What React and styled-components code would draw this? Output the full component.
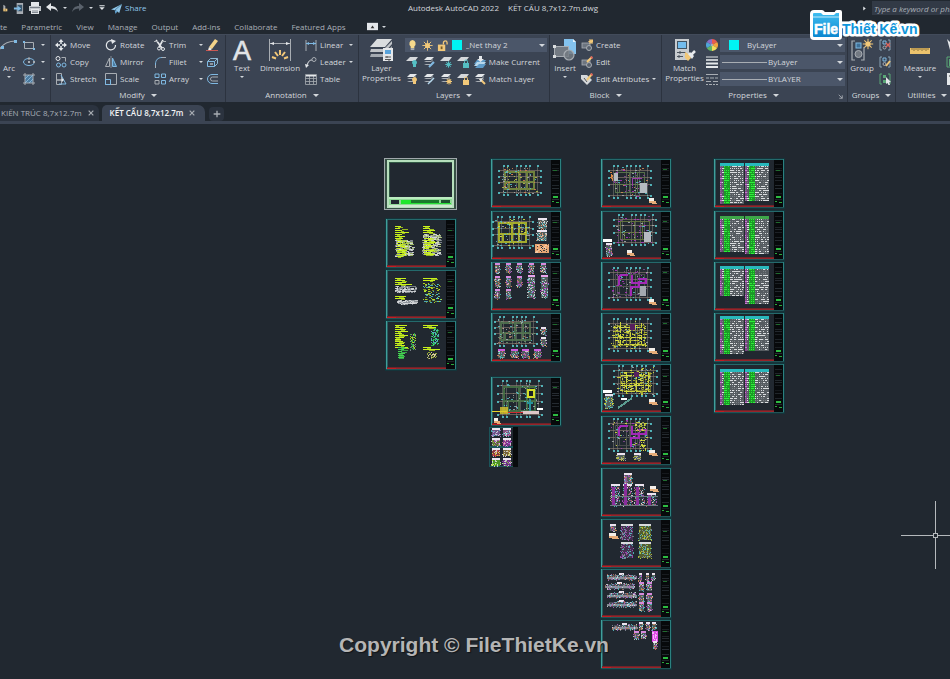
import React from 'react';
import styled, { createGlobalStyle } from 'styled-components';

const c = {
  dark: '#212830',
  panel: '#3b4453',
  edge: '#2c333f',
  field: '#4b5669',
  text: '#d3d7dc',
  dim: '#a9afb7',
  white: '#e4e7ea',
  grey: '#a8adb3',
  blue: '#7fb9e2',
  gold: '#f2c879',
  teal: '#55bfc4',
};

const GlobalStyle = createGlobalStyle`
  * { box-sizing: border-box; }
  body { margin: 0; background: ${c.dark}; }
  button, input, select { font: inherit; color: inherit; border: 0; background: none; padding: 0; margin: 0; }
  svg { display: block; flex: none; }
`;

const Page = styled.div`
  min-height: 100vh;
  display: flex;
  flex-direction: column;
  overflow: hidden;
  background: ${c.dark};
  color: ${c.text};
  font: 8px/12px "Open Sans", "Noto Sans", sans-serif;
  white-space: nowrap;
`;

/* ---------- title bar ---------- */
const TitleBar = styled.header`
  position: relative;
  display: flex;
  align-items: center;
  justify-content: space-between;
  height: 16px;
`;
const QuickAccess = styled.div`
  display: flex;
  align-items: center;
  flex: 1 0 0;
  gap: 5px;
`;
const QuickButton = styled.button`
  display: flex;
  align-items: center;
  gap: ${(p) => (p.$wide ? 3 : 5)}px;
  color: ${(p) => (p.$accent ? '#8fc6e8' : c.text)};
`;
const DocTitle = styled.h1`
  display: flex;
  gap: 9px;
  margin: 0 0 0 56px;
  font-size: 8px;
  font-weight: 400;
`;
const SearchArea = styled.div`
  display: flex;
  align-items: center;
  justify-content: flex-end;
  flex: 1 0 0;
  gap: 5px;
`;
const SearchInput = styled.input`
  width: 78px;
  height: 14px;
  padding-left: 2px;
  background: #323a46;
  font-style: italic;
  &::placeholder { color: ${c.dim}; opacity: 1; }
`;

/* ---------- menu ---------- */
const Menu = styled.nav`
  display: flex;
  align-items: center;
  gap: 14px;
  height: 18px;
  padding-top: 3px;
  color: ${c.dim};
`;
const MenuLink = styled.a`
  color: inherit;
  text-decoration: none;
`;
const MinimizeButton = styled.button`
  display: flex;
  align-items: center;
  gap: 4px;
  margin-left: 7px;
`;

/* ---------- ribbon ---------- */
const Ribbon = styled.div`
  display: grid;
  grid-template-columns: 51fr 175fr 133fr 191fr 112fr 186fr 48fr 54fr;
  background: ${c.panel};
  border-top: 1px solid #424b5a;
`;
const Panel = styled.section`
  display: flex;
  flex-direction: column;
  min-width: 0;
  overflow: hidden;
  border-right: 1px solid ${c.edge};
  &:last-child { border-right: 0; }
`;
const PanelBody = styled.div`
  display: flex;
  height: 53px;
  padding: 1px 2px 0 ${(p) => p.$left ?? 3}px;
  gap: ${(p) => p.$gap ?? 4}px;
`;
const PanelTitle = styled.div`
  display: flex;
  align-items: center;
  justify-content: center;
  gap: 6px;
  height: 14px;
  padding-left: ${(p) => p.$left || 0}px;
`;
const Launcher = styled.button`
  display: flex;
  margin: 2px 3px 0 auto;
`;
const TitleGroup = styled.div`
  display: flex;
  align-items: center;
  gap: 6px;
  margin-left: auto;
`;
const ToolColumn = styled.div`
  display: flex;
  flex-direction: column;
  flex: ${(p) => (p.$width ? `0 0 ${p.$width}px` : '1 1 0')};
  min-width: 0;
`;
const Tool = styled.button`
  display: flex;
  align-items: center;
  gap: 3px;
  height: 17px;
  padding-right: 3px;
  text-align: left;
`;
const BigTool = styled.button`
  display: flex;
  flex-direction: column;
  align-items: center;
  flex: 0 0 ${(p) => p.$width}px;
  line-height: 10px;
`;
const BigIcon = styled.span`
  display: flex;
  align-items: center;
  justify-content: center;
  height: 27px;
`;
const BigLabel = styled.span`
  margin-bottom: 3px;
`;
const Caret = styled.span`
  width: 0;
  height: 0;
  flex: none;
  margin-left: ${(p) => (p.$push ? 'auto' : 0)};
  border: ${(p) => (p.$large ? 3 : 2)}px solid transparent;
  border-top-color: ${c.text};
  border-bottom: 0;
`;
const Field = styled.label`
  display: flex;
  align-items: center;
  gap: ${(p) => p.$gap || 4}px;
  height: 14px;
  margin: 2px 0 1px;
  padding: 0 2px;
  background: ${c.field};
`;
const FieldSelect = styled.select`
  flex: 1;
  min-width: 0;
  appearance: none;
  outline: 0;
`;
const Swatch = styled.span`
  width: 10px;
  height: 10px;
  margin-left: ${(p) => p.$left || 0}px;
  background: #00f4f4;
`;
const LineSample = styled.span`
  width: 45px;
  border-top: 1px solid ${c.grey};
`;
const ToolRow = styled.div`
  display: flex;
  gap: 2px;
  padding-left: 1px;
`;

/* ---------- file tabs ---------- */
const FileTabs = styled.div`
  display: flex;
  align-items: flex-end;
  height: 20px;
  border-bottom: 1px solid ${c.panel};
`;
const FileTab = styled.div`
  display: flex;
  align-items: center;
  gap: 5px;
  height: 16px;
  margin-right: ${(p) => (p.$active ? 4 : 3)}px;
  padding: ${(p) => (p.$active ? '0 9px 0 8px' : '0 4px 0 1px')};
  border-radius: ${(p) => (p.$active ? '5px 7px 0 0' : '0 6px 0 0')};
  background: ${(p) => (p.$active ? c.panel : '#2b333f')};
  color: ${(p) => (p.$active ? '#f3f4f5' : c.dim)};
  font-weight: ${(p) => (p.$active ? 600 : 400)};
`;
const NewTab = styled.button`
  display: flex;
  align-items: center;
  justify-content: center;
  width: 15px;
  height: 14px;
  border-radius: 4px;
  background: #2b333f;
`;
const TabRule = styled.div`
  height: 2px;
  background: ${c.panel};
`;

/* ---------- canvas ---------- */
const Canvas = styled.main`
  position: relative;
  flex: 1;
  overflow: hidden;
`;
const Drawing = styled.svg`
  width: 100%;
  height: auto;
`;
const Watermark = styled.p`
  position: absolute;
  left: 0;
  right: 2px;
  bottom: 22px;
  margin: 0;
  text-align: center;
  font: bold 21px/24px "Liberation Sans", Arial, sans-serif;
  color: #b5b5b5;
  text-shadow: 1px 1px 1px #101418;
`;
const LogoBadge = styled.svg`
  position: absolute;
  top: 8px;
  right: 29px;
`;

/* ---------- icons, each on a 12 unit grid ---------- */
const L = (d, s = c.white, w = 1, f = 'none') => <path d={d} stroke={s} strokeWidth={w} fill={f} />;
const F = (d, f = c.white) => <path d={d} fill={f} />;
const sheets = (
  <>
    {F('M4 1h7L8 4H1z')}
    {F('M3 5l5 0 2-2v1L8 6H1z', c.grey)}
    {F('M3 8h5l2-3v1L8 9H1z', c.grey)}
  </>
);
const oneSheet = F('M4 1h8L9 5H0z', '#d5d8db');
const bulb = (f) => F('M8.500 4a2.500 2.500 0 0 1 1.500 4.500V11H7V8.500A2.500 2.500 0 0 1 8.500 4z', f);
const lock = (f) => (
  <>
    <rect x="6" y="7" width="6" height="5" fill={f} />
    {L('M7.500 7V5.500a1.500 1.500 0 0 1 3 0V7', f)}
  </>
);
const blockBase = (
  <>
    <rect x="1" y="4" width="8" height="5" fill="#6d7580" stroke={c.grey} strokeWidth=".8" />
    <circle cx="8" cy="9" r="2.500" fill="#59616d" stroke={c.grey} />
  </>
);
const sun = (x, y, r, f = c.gold) => (
  <g stroke={f} strokeWidth="1">
    <circle cx={x} cy={y} r={r} fill={f} stroke="none" />
    {[0, 45, 90, 135].map((a) => (
      <path key={a} d={`M${x - r * 2} ${y}h${r * 4}`} transform={`rotate(${a} ${x} ${y})`} />
    ))}
  </g>
);
const brackets = (s) => L('M3 1H1v10h2M9 1h2v10H9', s);

const icons = {
  saveas: <>{F('M5 1l3 2v5H5z', c.grey)}{F('M5 7h6v4H5z', c.gold)}{L('M7 9h2', '#333')}</>,
  mobile: <><rect x="4" y="0" width="7" height="12" fill={c.grey} />{F('M5 2h5v7H5z', '#3a566c')}{F('M1 5h4V3l4 3-4 3V7H1z', c.blue)}</>,
  print: <>{F('M2 0h8v4H2z')}{F('M0 4h12v5H0z', '#c4c8cc')}{F('M2 7h8v5H2z')}{L('M3 9h6M3 10.500h6M1 5.500h10', '#59616d', 0.7)}</>,
  undo: F('M0 5l5-4v3c4 0 6 2 7 6-2-3-4-3.500-7-3.500V9z'),
  redo: F('M12 5L7 1v3C3 4 1 6 0 10c2-3 4-3.500 7-3.500V9z', '#5a626c'),
  more: F('M2 2h8v1.500H2zM2 5h8L6 9z'),
  share: <>{F('M0 7l12-6-3 10-4-3z', '#8fc6e8')}{F('M4 8l1 4 2-3z', '#63a6d6')}{L('M12 1L4 8', '#34607c', 0.7)}</>,
  rect: <>{L('M1.500 3.500h9v6h-9z', c.grey)}{F('M0 2h2v2H0zM10 9h2v2h-2z', c.blue)}</>,
  ellipse: <><ellipse cx="6" cy="6" rx="5.500" ry="3.500" fill="none" stroke={c.blue} />{F('M5 5h2v2H5zM10 5h2v2h-2zM5 1.500h2v2H5z', c.grey)}</>,
  hatch: <>{F('M2 2h8v8H2z', '#4b7ba0')}{L('M2 0v12M10 0v12M0 2h12M0 10h12', c.grey)}{L('M2 6l4-4M2 10l8-8M6 10l4-4', '#9fc9e6', 0.7)}</>,
  move: <>{L('M6 1v10M1 6h10', c.white, 1.5)}{F('M6 0l2.500 3h-5zM6 12l2.500-3h-5zM0 6l3-2.500v5zM12 6L9 3.500v5z')}<rect x="5" y="5" width="2" height="2" fill={c.panel} /></>,
  rotate: <>{L('M8 2.200A4.600 4.600 0 1 0 10.500 6', c.white, 1.2)}{F('M6 0l5 2-4 3z')}</>,
  trim: <>{L('M2 1l6 8M9 1L5 8', c.white, 1.6)}<circle cx="5" cy="9.500" r="1.500" fill="none" stroke={c.white} /><circle cx="9" cy="10" r="1.500" fill="none" stroke={c.white} />{L('M0 2.500h4M8 2.500h4', c.grey)}</>,
  eraser: <>{F('M9 0l3 2-6 8-3-2z', '#f3d489')}{F('M3 8l3 2-2 1.500H2z', '#f1efe9')}{L('M0 11.500h12', '#d95b55', 0.9)}</>,
  copy: <><circle cx="3" cy="2.500" r="2" fill="none" stroke={c.white} />{L('M6.500 1.500h4v4', c.grey)}<circle cx="3.500" cy="9" r="2" fill="none" stroke={c.blue} /><circle cx="9" cy="9" r="2" fill="none" stroke={c.blue} /></>,
  mirror: <>{L('M4.500 2v8.500H.5z', c.grey)}{L('M7.500 2v8.500h4z', c.blue, 1, '#4b7ba0')}{L('M6 0v12', c.grey, 0.7)}</>,
  fillet: <>{L('M1.500 12V8C1.500 4 4 1.500 8 1.500', c.blue)}{L('M8 1.500h4M1.500 9v3', c.grey)}</>,
  explode: <>{L('M1.500 5.500h7v5h-7z', c.blue)}{L('M1.500 5.500l3-3h7l-3 3M11.500 2.500v5l-3 3', '#8fb9d4')}{L('M4 8h3', c.white)}</>,
  stretch: <>{L('M1.500.5h5v11h-5z', c.grey)}{L('M6 2l5 9H4', c.blue)}{L('M2 7h5', c.white)}{F('M7 5l2 2-2 2z')}</>,
  scale: <>{L('M.5.5h11v11H.5z', c.grey)}{L('M.5 6.500h5v5', c.blue)}{L('M.5 6v5.500H6', c.blue)}</>,
  array: <>{L('M1 1h4v3.500H1zM7.500 1h4v3.500h-4zM7.500 7.500h4V11h-4z', c.blue)}{L('M1 7.500h4V11H1z', c.grey)}</>,
  offset: <>{L('M12 1.500H6a4.500 4.500 0 0 0 0 9h6', c.blue)}{L('M12 4H6.500a2 2 0 0 0 0 4H12', c.grey)}</>,
  linear: <>{L('M1 1v11M11 1v11', c.grey)}{L('M1 4.500h10', c.blue)}{F('M1 4.500l3-1.500v3zM11 4.500L8 3v3z', c.blue)}</>,
  leader: <>{L('M2 10c1-5 3-6 5-6', c.white)}{F('M0 8l4 1-3 3z')}<circle cx="9" cy="3.500" r="2" fill="none" stroke={c.grey} /></>,
  table: <>{L('M.5 1.500h11v10H.5zM.5 5.500h11M.5 8.500h11M4.500 2v9M8.500 2v9', c.grey, 0.8)}{F('M1 2h10v1.500H1z')}</>,
  bulbOn: <>{F('M6 0a4 4 0 0 1 2 7v2H4V7a4 4 0 0 1 2-7z', '#f6d98c')}{F('M4 9h4v2H4z', c.grey)}</>,
  sun: sun(6, 6, 2.8),
  unlock: <>{F('M1 5h8v7H1z', c.gold)}{L('M7 5V3a2 2 0 0 1 4 0v2', c.gold, 1.4)}{F('M4 7h2v3H4z', '#755c2a')}</>,
  layOff: <>{oneSheet}{bulb(c.teal)}</>,
  layIso: <>{sheets}{L('M6 11l5-5', c.blue, 2)}</>,
  layFreeze: <>{oneSheet}{sun(8.5, 8.5, 1.6, c.teal)}</>,
  layLock: <>{oneSheet}{lock(c.teal)}</>,
  layOn: <>{sheets}{bulb(c.gold)}</>,
  layUniso: <>{sheets}{L('M5 11l6-6', '#b6d7ec', 1.5)}</>,
  layThaw: <>{sheets}{sun(9, 8.5, 1.5)}</>,
  layUnlock: <>{oneSheet}{lock(c.gold)}</>,
  makeCurrent: <>{F('M3 4h9l-3 4H0z', '#5e9bc8')}{F('M3 6h9l-3 4H0z', '#b6d7ec')}{F('M5 8h7l-3 4H1z', '#5e9bc8')}{F('M5 0h3v3h2L6.500 6 3 3h2z')}</>,
  matchLayer: <>{sheets}{L('M6 6l5 5', c.gold, 2)}{F('M5 6l4-1-2 4z')}</>,
  create: <>{blockBase}{sun(10, 2.5, 1.3)}</>,
  edit: <>{blockBase}{L('M6 6l5-5', c.gold, 2)}{F('M11 0l1 2-1 1-2-2z', '#e0645b')}</>,
  editAttr: <>{F('M0 2h6l5 5-5 5-6-6z', '#d5d8db')}{L('M6 7l5-6', c.gold, 2)}{F('M11 0l1 2-1 1-2-2z', '#e0645b')}{L('M3 5l3 4', '#555')}</>,
  wheel: <>{['#e85a4f', '#f4a340', '#f3de5b', '#62b565', '#4ea5d8', '#8c6cc4'].map((f, i) => <path key={f} d="M6 6V0a6 6 0 0 1 5.200 3z" fill={f} transform={`rotate(${i * 60} 6 6)`} />)}<circle cx="6" cy="6" r="1.200" fill={c.grey} /></>,
  weights: <>{L('M0 1h12', c.white)}{L('M0 4h12', c.white, 1.6)}{L('M0 7.500h12M0 11h12', c.white, 2)}</>,
  types: L('M0 1.500h12M0 8.500h5M7 8.500h5M0 5h3M4 5h4M9 5h3M0 11.500h2M3 11.500h3M7 11.500h2M10 11.500h2', c.grey, 1.2),
  ungroup: <>{brackets('#8aa3b5')}{L('M4 2h3v3H4z', c.blue)}<circle cx="5.500" cy="8.500" r="1.500" fill="none" stroke={c.grey} />{L('M7 4l4 4M11 4L7 8', '#e0645b', 1.3)}</>,
  groupEdit: <>{brackets('#8aa3b5')}{L('M4 2h3v3H4z', c.blue)}<circle cx="5.500" cy="8" r="1.500" fill="none" stroke={c.grey} />{L('M7 10l4-5', c.gold, 2)}</>,
  groupSel: <>{brackets('#5aa777')}{F('M4 2h3v3H4zM4 7h3v3H4z', '#5aa777')}{F('M7 4l5 5-2 .5 1 2.500h-1.500L8.500 10 7 11z')}</>,
  cursor: F('M1 0l8 8H5l-1 3z'),
  quickSel: <>{L('M1 1h10v10H1z', '#5aa777')}{F('M3 3h7v7H3z', '#5aa777')}</>,
  calc: <>{F('M1 0h10v12H1z')}{L('M3 3h6', '#444')}</>,
  close: L('M2.500 2.500l7 7M9.500 2.500l-7 7', c.grey, 1.8),
  plus: L('M6 1v10M1 6h10', c.grey, 2),
  launch: L('M3 3l6 6M9 4v5H4', c.grey, 1.5),
  next: F('M3 1l6 5-6 5z'),
  minimize: <>{F('M0 2h12v8H0z')}{F('M4 8l2-3 2 3z', '#333')}</>,
};

const Icon = ({ name, size = 12 }) => (
  <svg width={size} height={size} viewBox="0 0 12 12" aria-hidden="true">{icons[name]}</svg>
);

const bigIcons = {
  text: (
    <svg width="22" height="26" viewBox="0 0 22 26" overflow="visible" aria-hidden="true">
      <text x="11" y="23" textAnchor="middle" fontSize="27" fontFamily="'Liberation Sans', Arial, sans-serif" fill="#e1e4e7" stroke="#e1e4e7" strokeWidth=".6">A</text>
    </svg>
  ),
  arc: (
    <svg width="18" height="26" viewBox="4 0 18 26" aria-hidden="true">
      {L('M1 18C4 8 10 4 20 4', c.grey, 1.2)}
      {F('M18 3h3v3h-3zM5 9h3v3H5z', c.blue)}
    </svg>
  ),
  dimension: (
    <svg width="24" height="24" viewBox="0 0 24 24" aria-hidden="true">
      {L('M1.500 1v22M22.500 1v22M2 5.500h20', c.grey)}
      {F('M2 5.500L6 4v3zM22 5.500L18 4v3z')}
      {L('M12 12v5M7 14l3 4M17 14l-3 4M4 19l4 1.500M20 19l-4 1.500', c.gold, 2)}
    </svg>
  ),
  layers: (
    <svg width="26" height="26" viewBox="0 0 26 26" aria-hidden="true">
      {F('M9 2h15l-7 8H2z', '#dadddf')}
      {F('M3 12h13l8-8v3l-7 8H2z', '#c0c4c8')}
      {F('M3 17h13l8-8v3l-7 8H2z', '#a4aab1')}
      {F('M15 11h10v7H15z')}{F('M17 13h6v4h-6z', '#58a3db')}
      {F('M15 18h10v6H15z')}{L('M17 20h6M17 22.500h6M19 19v2M21 22v2', '#555')}
    </svg>
  ),
  insert: (
    <svg width="24" height="24" viewBox="0 0 24 24" aria-hidden="true">
      {F('M11 1h9l3 3v12H11z', '#83c2ee')}{F('M20 1l3 3h-3z', '#e4f3fc')}
      <rect x="1.500" y="8.500" width="14" height="10" fill="#737a83" stroke={c.grey} />
      <circle cx="16" cy="17" r="5" fill="#737a83" fillOpacity=".85" stroke={c.grey} strokeWidth="1.200" />
      {F('M0 7h3v3H0zM0 17h3v3H0z', '#dadddf')}
    </svg>
  ),
  match: (
    <svg width="24" height="24" viewBox="0 0 24 24" aria-hidden="true">
      {F('M2 1h14v21H2z', '#c8ccd0')}{F('M4 3h10v8H4z', '#415463')}{F('M5 4h8v6H5z', '#72bced')}
      {L('M4 14.500h9M4 18.500h6M7 13v3M6 17v3', '#4b535d')}
      {F('M12 14l5 3 1 3-3 3-3-3z', c.gold)}{F('M15 16l2-2 4 4-2 3z', '#e8eaec')}{L('M18 17l4-4', '#e8eaec', 2.5)}
    </svg>
  ),
  group: (
    <svg width="24" height="26" viewBox="0 0 24 26" aria-hidden="true">
      {L('M5 4H2v19h3M14 10v13h-3', c.grey, 1.2)}
      <rect x="6" y="6" width="5" height="5" fill="#3d6f97" stroke={c.blue} />
      <circle cx="8.500" cy="17" r="3.500" fill="#737a83" stroke={c.grey} />
      {sun(18, 7, 2.6)}
    </svg>
  ),
  measure: (
    <svg width="22" height="26" viewBox="0 0 22 26" aria-hidden="true">
      {F('M1 11h20v6H1z', '#edc36d')}
      {L('M3 11v2M5 11v3M7 11v2M9 11v3M11 11v2M13 11v3M15 11v2M17 11v3M19 11v2', '#75602e', 0.8)}
    </svg>
  ),
};

const ToolButton = ({ icon, label, menu }) => (
  <Tool aria-label={label || icon}>
    <Icon name={icon} />
    {label}
    {menu && <Caret $push />}
  </Tool>
);
const BigButton = ({ icon, lines, width, menu }) => (
  <BigTool $width={width}>
    <BigIcon>{bigIcons[icon]}</BigIcon>
    {lines.map((line, i) => (i === lines.length - 1 ? <BigLabel key={line}>{line}</BigLabel> : <span key={line}>{line}</span>))}
    {menu && <Caret />}
  </BigTool>
);
const Title = ({ children, left }) => (
  <PanelTitle $left={left}>{children}<Caret $large /></PanelTitle>
);

/* ---------- drawing sheets ---------- */
const random = (seed) => {
  let s = seed * 7919 + 13;
  return () => {
    s = (s * 16807) % 2147483647;
    return s / 2147483647;
  };
};
const dot = (key, x, y, w, h, fill, opacity) => (
  <rect key={key} x={Math.round(x)} y={Math.round(y)} width={w} height={h} fill={fill} opacity={opacity} />
);

function Speckle({ x, y, w, h, n, colors, seed, dash = 1 }) {
  const r = random(seed);
  return Array.from({ length: n }, (_, i) =>
    dot(i, x + r() * (w - dash), y + r() * (h - 1), 1 + Math.floor(r() * dash), 1, colors[Math.floor(r() * colors.length)], 0.85));
}

const axisX = [0, 0.12, 0.38, 0.5, 0.66, 0.76, 1];
const axisY = [0, 0.28, 0.55, 1];
function Plan({ x, y, w, h, wall, accents, seed, heavy }) {
  const ix = x + 5;
  const iy = y + 5;
  const iw = w - 10;
  const ih = h - 9;
  return (
    <g>
      {axisX.map((t, i) => (
        <g key={i}>
          {dot('l', ix + t * iw, y + 1, 1, h - 2, '#6f706c', 0.65)}
          {dot('a', ix + t * iw, y, 2, 2, c.teal, 0.9)}
          {dot('b', ix + t * iw, y + h - 2, 2, 2, c.teal, 0.9)}
        </g>
      ))}
      {axisY.map((t, i) => (
        <g key={i}>
          {dot('l', x + 1, iy + t * ih, w - 2, 1, '#8c7b70', 0.65)}
          {dot('a', x, iy + t * ih, 2, 2, c.teal, 0.9)}
          {dot('b', x + w - 2, iy + t * ih, 2, 2, c.teal, 0.9)}
        </g>
      ))}
      <g stroke={wall} strokeWidth={heavy ? 2 : 1} fill="none" opacity=".85">
        <path d={`M${ix + 2} ${iy + 2}h${iw - 5}v${ih - 5}h${5 - iw}zM${ix + 2} ${iy + Math.round(ih * 0.55)}h${iw - 5}M${ix + Math.round(iw * 0.48)} ${iy + 2}v${ih - 5}M${ix + Math.round(iw * 0.7)} ${iy + 2}v${ih - 5}M${ix + 6} ${iy + Math.round(ih * 0.5)}v${Math.round(ih * 0.4)}`} />
      </g>
      <Speckle x={x + 3} y={y + 2} w={w - 6} h={h - 4} n={70} colors={[...accents, c.grey, c.teal]} seed={seed} dash={2} />
    </g>
  );
}

function Schedule({ x, y, w, h, seed, head = '#20c9ce' }) {
  const r = random(seed);
  const out = [
    dot('bg', x, y, w, h, '#565c61'),
    dot('pp', x, y + 3, 2, h - 3, '#7d4887'),
    dot('gr', x + 4, y + 3, 6, h - 3, '#1c9a27'),
    dot('hd', x, y, w, 3, head, 0.85),
  ];
  for (let j = 3; j < h; j += 2) {
    for (let i = 0; i < w; i += 2) {
      const v = r();
      let fill = v > 0.45 ? '#d9dcde' : '#777d82';
      if (i < 2) fill = v > 0.5 ? '#c774d2' : '#777d82';
      if (i >= 4 && i < 10) fill = '#2df038';
      if (v > 0.12) out.push(dot(`${i}-${j}`, x + i, y + j, v > 0.72 ? 2 : 1, 1, fill));
    }
  }
  return out;
}

function Lines({ x, y, w, h, color = '#c9f21b', seed }) {
  const r = random(seed);
  const out = [];
  for (let j = 0; j < h; j += 2) {
    out.push(dot(j, x, y + j, Math.max(3, Math.round(w * (0.35 + r() * 0.6))), 1, color));
    out.push(dot(`s${j}`, x + r() * w * 0.5, y + j + 1, 3 + Math.floor(r() * 5), 1, color, 0.7));
  }
  return out;
}

function Detail({ x, y, w = 7, h = 10, seed, head = '#ece4ef', body = '#7d8a83', colors = ['#b24ac1', c.teal, '#d9dcde', '#d98b56'] }) {
  return (
    <g>
      {dot('b', x + 1, y + 2, Math.max(2, w - 2), h - 3, body, 0.55)}
      {dot('h', x + 1, y, w - 2, 2, head)}
      <Speckle x={x} y={y + 2} w={w} h={h - 2} n={Math.round(w * h * 0.35)} colors={colors} seed={seed} />
    </g>
  );
}

const Note = ({ x, y, w = 7 }) => (
  <g>
    {dot('a', x, y, w - 2, 3, '#f4efe9')}
    {dot('b', x, y + 3, w, 2, '#e6ac78')}
    {dot('c', x + 3, y + 5, w - 2, 1, '#e6ac78')}
  </g>
);

function Sheet({ x, y, seed, children }) {
  const r = random(seed + 50);
  return (
    <g transform={`translate(${x} ${y})`}>
      <rect x="0" y="0" width="72" height="51" fill="#14343a" />
      <rect x="1" y="1" width="70" height="49" fill={c.dark} />
      <rect x="1" y="1" width="70" height="1" fill="#246a6c" />
      <rect x="1" y="1" width="1" height="49" fill="#3f9f9b" />
      <rect x="2" y="2" width="1" height="47" fill="#2a5d62" />
      <rect x="70" y="1" width="1" height="49" fill="#2b8180" />
      <rect x="1" y="49" width="70" height="1" fill="#205457" />
      <rect x="61" y="2" width="9" height="47" fill="#07090b" />
      {[6, 10, 12, 17, 19, 22, 27, 30, 35, 41].map((j) => dot(j, 62, j, 7, 1, '#30373e', 0.3 + r() * 0.5))}
      {dot('g0', 63, 11 + Math.round(r() * 2), 4, 1, '#1f6b2d')}
      {dot('g1', 63, 38, 5, 2, '#2dbb41')}
      {dot('g2', 62, 43, 2, 1, '#2aa83c')}
      {dot('g3', 66, 44, 3, 1, '#2aa83c')}
      {dot('r1', 2, 47, 59, 1, '#702329')}
      {dot('r2', 2, 48, 9, 1, '#c21c22')}
      {dot('r3', 11, 48, 50, 1, '#97242a')}
      {children}
    </g>
  );
}

const purple = ['#b033c4', '#7f4a8f'];
const Rooms = ({ x = 0, y = 0 }) => (
  <path d={`M${x} ${y + 10}v-7q0-3 3-3h6M${x + 13} ${y}v8h14v-4h-8M${x + 12} ${y + 21}v-9h8v-6`} stroke="#a229b6" strokeWidth="2" fill="none" />
);
const Beam = ({ x, y, w, seed }) => (
  <g>
    {dot('m', x + 2, y + 1, w - 3, 5, '#6d6f80', 0.5)}
    {dot('l', x, y + 3, w, 2, '#9aa0aa', 0.8)}
    {dot('h', x + Math.round(w * 0.4), y - 1, 5, 2, '#ece4ef')}
    <Speckle x={x} y={y} w={w} h={7} n={w * 3} colors={['#b16ac0', '#89909a', c.teal, '#d6d9dc', '#b16f57']} seed={seed} />
  </g>
);

const noteSheets = [
  <>
    <Lines x={10} y={8} w={15} h={13} seed={1} />
    <Speckle x={10} y={22} w={20} h={17} n={220} colors={['#d9dcde', '#a7c46a', '#8a9096']} seed={2} dash={3} />
    <Lines x={12} y={22} w={11} h={17} seed={3} />
    <Lines x={38} y={8} w={15} h={8} seed={4} />
    <Speckle x={37} y={16} w={20} h={22} n={280} colors={['#d9dcde', '#b8cf7e', '#8a9096']} seed={5} dash={3} />
    <Lines x={39} y={20} w={14} h={18} seed={6} />
  </>,
  <>
    <Lines x={10} y={9} w={18} h={7} seed={7} />
    <Speckle x={10} y={17} w={23} h={7} n={130} colors={['#d9dcde', '#8a9096']} seed={8} dash={3} />
    <Lines x={10} y={27} w={16} h={4} seed={9} />
    <Speckle x={12} y={31} w={21} h={5} n={90} colors={['#d9dcde', '#8a9096']} seed={10} dash={4} />
    <Lines x={38} y={9} w={18} h={4} seed={11} />
    <Speckle x={38} y={14} w={19} h={20} n={120} colors={['#c9f21b', '#829b28', c.teal]} seed={12} dash={2} />
  </>,
  <>
    <Lines x={10} y={5} w={14} h={24} seed={13} />
    <Lines x={13} y={27} w={8} h={12} seed={14} color="#43d650" />
    <Lines x={38} y={5} w={17} h={4} seed={15} />
    <Speckle x={25} y={13} w={6} h={18} n={75} colors={['#35b957', '#c9f21b', '#89909a']} seed={16} />
    <Speckle x={46} y={8} w={8} h={18} n={110} colors={['#28c74a', c.teal]} seed={17} />
    <Lines x={38} y={27} w={19} h={4} seed={18} />
    <Speckle x={42} y={32} w={10} h={7} n={50} colors={['#e1d1aa', '#a5b83c']} seed={19} />
  </>,
];

const structureSheets = [
  <Plan x={8} y={7} w={44} h={31} wall="#7c913f" accents={['#d77f54', '#b7c64a']} seed={20} heavy />,
  <>
    <Plan x={2} y={6} w={42} h={33} wall="#b8bf2c" accents={['#dbe23e', c.teal]} seed={21} heavy />
    <Detail x={47} y={8} w={11} h={12} seed={22} colors={['#e79a6b', '#d9dcde', c.teal]} />
    <Detail x={46} y={20} w={12} h={12} seed={23} colors={['#e79a6b', '#d9dcde', c.teal]} />
    <rect x="45" y="34" width="14" height="9" fill="#e9a773" />
    <Speckle x={45} y={34} w={15} h={11} n={35} colors={[c.dark, '#f4d0ae']} seed={24} dash={2} />
  </>,
  <>
    {[4, 15, 26, 38, 50].map((x, i) => <Detail key={x} x={x} y={2} seed={30 + i} h={11} head="#d78ade" />)}
    {[4, 15, 26].map((x, i) => <Detail key={x} x={x} y={15} seed={36 + i} h={12} head="#d78ade" />)}
    {[37, 50].map((x, i) => <Detail key={x} x={x} y={14} w={9} h={24} seed={40 + i} head="#e9a6ee" colors={['#d245dc', c.teal, '#d9dcde']} />)}
    {[4, 15].map((x, i) => <Detail key={x} x={x} y={28} seed={44 + i} h={11} head="#d78ade" />)}
  </>,
  <>
    <Plan x={4} y={4} w={44} h={31} wall="#537751" accents={['#a27763', '#689472']} seed={50} heavy />
    <Detail x={50} y={15} h={9} seed={51} />
    <Detail x={50} y={25} h={10} seed={52} />
    {[7, 20, 31, 43].map((x, i) => <Detail key={x} x={x} y={37} w={9} h={10} seed={53 + i} head="#d15ae0" />)}
  </>,
  <>
    <Plan x={7} y={4} w={46} h={38} wall="#487447" accents={['#7d8b76', c.teal]} seed={60} heavy />
    <rect x="38" y="14" width="6" height="7" fill="#192027" stroke="#d6df29" strokeWidth="2" />
    <path d="M40 23v12M37 27h6" stroke="#28939a" strokeWidth="2" />
    <rect x="14" y="36" width="25" height="1" fill="#d02a31" />
    <rect x="33" y="35" width="16" height="3" fill="#ddc7c7" />
    <rect x="47" y="32" width="6" height="2" fill="#fff" />
    <path d="M2 35h15" stroke="#e6d42a" />
    <rect x="10" y="31" width="8" height="7" fill="#d9c62d" opacity=".8" />
    <Note x={4} y={42} w={6} />
  </>,
];

const grey = <rect x="40" y="25" width="6" height="10" fill="#a3a9af" />;
const floorSheets = [
  <>
    <Plan x={8} y={7} w={44} h={34} wall="#5e7a4c" accents={[...purple, '#d98b56']} seed={70} />
    <rect x="14" y="15" width="4" height="8" fill="#b6bbc1" /><rect x="40" y="25" width="7" height="10" fill="#b6bbc1" />
    <Speckle x={10} y={14} w={4} h={10} n={25} colors={['#e08c48']} seed={71} />
    <path d="M32 20h10M32 20v8" stroke="#963fa5" />
    <Note x={49} y={40} />
  </>,
  <>
    <Plan x={13} y={4} w={44} h={32} wall="#687a3e" accents={purple} seed={72} />
    <rect x="44" y="22" width="7" height="10" fill="#b6bbc1" />
    <rect x="3" y="29" width="9" height="3" fill="#fff" />
    <Detail x={5} y={33} w={8} h={14} seed={73} />
    <Note x={27} y={40} />
  </>,
  <>
    <Plan x={8} y={6} w={44} h={34} wall="#4d504f" accents={purple} seed={74} />
    <Rooms x={19} y={14} />{grey}<Note x={49} y={38} />
  </>,
  <>
    <Plan x={8} y={6} w={44} h={34} wall="#817d34" accents={['#dbe23e', '#e4e73e', '#b7bc30']} seed={75} />
    <path d="M13 15h27M13 25h33M18 32h28M20 10v22M30 14v18M41 11v22" stroke="#cfd43e" strokeWidth="1" fill="none" strokeDasharray="5 1" />
    <Speckle x={12} y={12} w={36} h={22} n={90} colors={['#e1e645', '#b7bc30']} seed={76} dash={3} />
    <rect x="30" y="12" width="5" height="6" fill="#57205f" /><Note x={49} y={36} w={8} />
  </>,
  <>
    <Plan x={13} y={2} w={45} h={32} wall="#817d34" accents={['#dbe23e', '#e4e73e']} seed={77} />
    <path d="M21 12h30M21 22h30M24 28h27M26 9v22M36 11v18M48 9v20" stroke="#cfd43e" fill="none" strokeDasharray="5 1" />
    <Speckle x={20} y={9} w={32} h={22} n={90} colors={['#e1e645', '#b7bc30']} seed={78} dash={3} />
    <rect x="34" y="9" width="5" height="5" fill="#57205f" />
    <rect x="3" y="27" width="9" height="3" fill="#fff" /><Detail x={4} y={31} w={10} h={15} seed={79} colors={['#dbe23e', c.teal]} />
    <path d="M18 45l14-10" stroke="#5c9d91" strokeWidth="2" /><rect x="21" y="35" width="6" height="2" fill="#fff" />
    <Note x={49} y={36} w={8} />
  </>,
  <>
    <Plan x={8} y={3} w={44} h={34} wall="#4d504f" accents={[...purple, '#dbe23e']} seed={80} />
    <Rooms x={19} y={11} />
    <Speckle x={35} y={7} w={12} h={10} n={40} colors={['#dbe23e', '#a5af38']} seed={81} dash={2} />
    <Speckle x={40} y={24} w={6} h={12} n={35} colors={['#dbe23e']} seed={82} />
    <Detail x={16} y={38} w={10} h={8} seed={83} colors={['#bfc63e', c.grey]} />
    <Detail x={33} y={38} w={9} h={8} seed={84} colors={['#bfc63e', c.grey]} />
    <Note x={49} y={35} w={8} />
  </>,
  <>
    {[10, 22, 34, 46].map((x, i) => (
      <g key={x}>
        <Detail x={x} y={i === 3 ? 26 : 17} w={11} h={i === 3 ? 14 : 23} seed={90 + i} body="#3d4650" colors={['#b24ac1', c.teal, '#d9dcde', '#b97462']} />
        <rect x={x + 2} y={i === 1 ? 9 : i === 3 ? 28 : 20} width="3" height={i === 1 ? 30 : i === 3 ? 11 : 19} fill="#8b2f9b" />
      </g>
    ))}
    <Detail x={23} y={6} w={10} h={12} seed={95} />
    <path d="M10 38h48M10 29h48" stroke="#6f7b83" />
    <Note x={50} y={19} w={8} />
  </>,
  <>
    <Detail x={9} y={6} w={8} h={8} seed={96} /><Note x={9} y={15} w={9} />
    {[20, 38].map((x, i) => [6, 24].map((y, j) => (
      <g key={`${x}${y}`}>
        <Detail x={x} y={y} w={14} h={17} seed={97 + i * 2 + j} body={i ? '#7b8b32' : '#64386d'} head="#d9dcde" colors={i ? ['#c0cf35', c.teal, '#848b91'] : ['#a74db6', c.teal, '#848b91']} />
      </g>
    )))}
  </>,
  <>
    {[6, 15, 24, 33].map((y, i) => <Beam key={y} x={i === 1 ? 5 : 7} y={y} w={30} seed={110 + i} />)}
    {[38, 45, 51].map((x, i) => <Detail key={x} x={x} y={5} w={5} h={9} seed={114 + i} />)}
    {[14, 25, 34].map((y, i) => [38, 46].map((x) => <Detail key={`${x}${y}`} x={x} y={y} h={10} seed={120 + i + x} head="#d78ade" />))}
  </>,
  <>
    <Beam x={12} y={5} w={26} seed={130} />
    {[38, 45, 51].map((x, i) => <Detail key={x} x={x} y={3} w={6} h={9} seed={131 + i} />)}
    {[33, 40].map((x) => <Detail key={x} x={x} y={12} h={9} seed={134 + x} head="#d78ade" />)}
    <rect x="52" y="12" width="6" height="11" fill="#e14be8" />
    <Speckle x={52} y={12} w={6} h={11} n={20} colors={['#f8c8fb']} seed={136} />
    <Detail x={52} y={22} w={6} h={9} seed={137} />
  </>,
];

const scheduleSheets = [
  [5, 41, 5, 38, '#20c9ce'],
  [6, 36, 6, 38, '#39b345'],
  [5, 30, 5, 38, '#20c9ce'],
  [4, 38, 4, 35, '#20c9ce'],
  [6, 36, 6, 34, '#20c9ce'],
];

const noteY = [218, 269, 320];
const structY = [158, 210, 261, 312, 376];
const floorY = [158, 210, 261, 312, 363, 415, 467, 518, 568, 619];
const schedY = [158, 210, 261, 312, 363];

function TitleSheet() {
  return (
    <g transform="translate(384 158)">
      <rect width="73" height="52" fill="#a0a8ab" />
      <rect x="1" y="1" width="71" height="50" fill="#365044" />
      <rect x="3" y="2" width="67" height="48" fill="#b6dfbc" />
      <rect x="5" y="4" width="63" height="45" fill="#315944" />
      <rect x="6" y="5" width="62" height="35" fill={c.dark} />
      <rect x="5" y="40" width="63" height="7" fill="#8fd996" />
      <rect x="17" y="42" width="10" height="4" fill="#1fe62c" />
      <rect x="5" y="39" width="63" height="2" fill="#bcebc0" />
      <rect x="7" y="42" width="8" height="4" fill={c.dark} />
      <rect x="27" y="42" width="28" height="3" fill="#1a7a2c" />
      <rect x="27" y="45" width="40" height="1" fill="#27e036" />
      <rect x="57" y="42" width="9" height="3" fill="#1e5230" />
      <rect x="5" y="47" width="63" height="2" fill="#cfe8d1" />
    </g>
  );
}

function SmallSheet() {
  const colors = [['#a874c8', c.teal], ['#d072bd', c.teal], ['#91a73f', '#b24ac1'], ['#bb45d2', '#d96d9f'], ['#e0474e', '#dbe23e'], ['#b99342', '#dbe23e'], ['#74e61f', '#c9f21b'], ['#a33dc5', '#94c848']];
  return (
    <g transform="translate(489 427)">
      <rect width="29" height="40" fill="#1b545a" />
      <rect x="1" y="1" width="23" height="18" fill={c.dark} />
      <rect x="1" y="21" width="23" height="18" fill={c.dark} />
      <rect x="24" y="0" width="5" height="40" fill="#080b0d" />
      {colors.map((set, i) => (
        <Detail key={i} x={2 + (i % 2) * 11} y={1 + Math.floor(i / 2) * 10} w={10} h={9} seed={150 + i} body={set[0]} colors={[...set, '#d9dcde']} />
      ))}
    </g>
  );
}

const ModelSpace = () => (
  <Drawing viewBox="0 124 950 555" shapeRendering="crispEdges" role="img" aria-label="Model space">
    <TitleSheet />
    {noteSheets.map((s, i) => <Sheet key={i} x={385} y={noteY[i]} seed={i}>{s}</Sheet>)}
    {structureSheets.map((s, i) => <Sheet key={i} x={490} y={structY[i]} seed={i + 5}>{s}</Sheet>)}
    <SmallSheet />
    {floorSheets.map((s, i) => <Sheet key={i} x={600} y={floorY[i]} seed={i + 10}>{s}</Sheet>)}
    {scheduleSheets.map(([y1, h1, y2, h2, head], i) => (
      <Sheet key={i} x={713} y={schedY[i]} seed={i + 20}>
        <Schedule x={7} y={y1} w={24} h={h1} seed={i * 2 + 200} head={head} />
        <Schedule x={32} y={y2} w={24} h={h2} seed={i * 2 + 201} head={head} />
      </Sheet>
    ))}
    <g fill="#b5b9bc">
      <rect x="901" y="535" width="32" height="1" />
      <rect x="938" y="535" width="12" height="1" />
      <rect x="935" y="501" width="1" height="32" />
      <rect x="935" y="538" width="1" height="31" />
    </g>
    <rect x="933.500" y="533.500" width="4" height="4" fill="none" stroke="#b5b9bc" />
  </Drawing>
);

const Logo = () => (
  <LogoBadge width="112" height="34" viewBox="0 0 112 34" role="img" aria-label="FileThiết Kế.vn">
    <defs>
      <linearGradient id="brand" x1="0" y1="0" x2="0" y2="1">
        <stop offset="0" stopColor="#3fbdf0" />
        <stop offset="1" stopColor="#0b86cf" />
      </linearGradient>
    </defs>
    <path d="M3 6q0-2 2-2h8l2 2h12l1-2h3v25q0 1-2 1H5q-2 0-2-2z" fill="#fff" stroke="#fff" strokeWidth="4" strokeLinejoin="round" />
    <path d="M4 6q0-1 1-1h7l2 2h11l2-2h3v24H5q-1 0-1-1z" fill="url(#brand)" />
    <path d="M4 9h26" stroke="#bfeafb" />
    <g fontFamily="'Liberation Sans', Arial, sans-serif" fontWeight="700" strokeLinejoin="round">
      <text x="5" y="26" fontSize="14" fill="#fff" stroke="#fff" strokeWidth=".5">File</text>
      <text x="33" y="26" fontSize="14" fill="#0f96db" stroke="#fff" strokeWidth="5" paintOrder="stroke">Thiết Kế.vn</text>
    </g>
  </LogoBadge>
);

export default function App() {
  return (
    <Page>
      <GlobalStyle />
      <TitleBar>
        <QuickAccess>
          <QuickButton aria-label="Save as"><Icon name="saveas" size={8} /></QuickButton>
          <QuickButton aria-label="Open from mobile"><Icon name="mobile" size={11} /></QuickButton>
          <QuickButton aria-label="Plot"><Icon name="print" /></QuickButton>
          <QuickButton aria-label="Undo"><Icon name="undo" /><Caret /></QuickButton>
          <QuickButton aria-label="Redo"><Icon name="redo" /><Caret /></QuickButton>
          <QuickButton aria-label="Customize"><Icon name="more" size={8} /></QuickButton>
          <QuickButton $accent $wide><Icon name="share" size={11} />Share</QuickButton>
        </QuickAccess>
        <DocTitle><span>Autodesk AutoCAD 2022</span><span>KẾT CẤU 8,7x12.7m.dwg</span></DocTitle>
        <SearchArea>
          <Icon name="next" size={5} />
          <SearchInput aria-label="Search" placeholder="Type a keyword or phrase" />
        </SearchArea>
        <Logo />
      </TitleBar>
      <Menu>
        {['te', 'Parametric', 'View', 'Manage', 'Output', 'Add-ins', 'Collaborate', 'Featured Apps'].map((m) => (
          <MenuLink key={m} href="#">{m}</MenuLink>
        ))}
        <MinimizeButton aria-label="Minimize ribbon"><Icon name="minimize" size={11} /><Caret /></MinimizeButton>
      </Menu>
      <Ribbon>
        <Panel>
          <PanelBody $left={0} $gap={5}>
            <BigButton icon="arc" lines={['Arc']} width={12} menu />
            <ToolColumn>
              <ToolButton icon="rect" menu />
              <ToolButton icon="ellipse" menu />
              <ToolButton icon="hatch" menu />
            </ToolColumn>
          </PanelBody>
        </Panel>
        <Panel>
          <PanelBody $left={4} $gap={0}>
            <ToolColumn $width={50}>
              <ToolButton icon="move" label="Move" />
              <ToolButton icon="copy" label="Copy" />
              <ToolButton icon="stretch" label="Stretch" />
            </ToolColumn>
            <ToolColumn $width={49}>
              <ToolButton icon="rotate" label="Rotate" />
              <ToolButton icon="mirror" label="Mirror" />
              <ToolButton icon="scale" label="Scale" />
            </ToolColumn>
            <ToolColumn $width={52}>
              <ToolButton icon="trim" label="Trim" menu />
              <ToolButton icon="fillet" label="Fillet" menu />
              <ToolButton icon="array" label="Array" menu />
            </ToolColumn>
            <ToolColumn $width={16}>
              <ToolButton icon="eraser" />
              <ToolButton icon="explode" />
              <ToolButton icon="offset" />
            </ToolColumn>
          </PanelBody>
          <Title>Modify</Title>
        </Panel>
        <Panel>
          <PanelBody>
            <BigButton icon="text" lines={['Text']} width={26} menu />
            <BigButton icon="dimension" lines={['Dimension']} width={42} />
            <ToolColumn>
              <ToolButton icon="linear" label="Linear" menu />
              <ToolButton icon="leader" label="Leader" menu />
              <ToolButton icon="table" label="Table" />
            </ToolColumn>
          </PanelBody>
          <Title>Annotation</Title>
        </Panel>
        <Panel>
          <PanelBody>
            <BigButton icon="layers" lines={['Layer', 'Properties']} width={38} />
            <ToolColumn>
              <Field>
                <Icon name="bulbOn" size={11} /><Icon name="sun" size={11} /><Icon name="unlock" size={11} /><Swatch />
                <FieldSelect aria-label="Layer"><option>_Net thay 2</option></FieldSelect>
                <Caret $large />
              </Field>
              <ToolRow>
                {['layOff', 'layIso', 'layFreeze', 'layLock'].map((n) => <ToolButton key={n} icon={n} />)}
                <ToolButton icon="makeCurrent" label="Make Current" />
              </ToolRow>
              <ToolRow>
                {['layOn', 'layUniso', 'layThaw', 'layUnlock'].map((n) => <ToolButton key={n} icon={n} />)}
                <ToolButton icon="matchLayer" label="Match Layer" />
              </ToolRow>
            </ToolColumn>
          </PanelBody>
          <Title>Layers</Title>
        </Panel>
        <Panel>
          <PanelBody>
            <BigButton icon="insert" lines={['Insert']} width={24} menu />
            <ToolColumn>
              <ToolButton icon="create" label="Create" />
              <ToolButton icon="edit" label="Edit" />
              <ToolButton icon="editAttr" label="Edit Attributes" menu />
            </ToolColumn>
          </PanelBody>
          <Title>Block</Title>
        </Panel>
        <Panel>
          <PanelBody $gap={2}>
            <BigButton icon="match" lines={['Match', 'Properties']} width={39} />
            <ToolColumn $width={12}>
              <ToolButton icon="wheel" />
              <ToolButton icon="weights" />
              <ToolButton icon="types" />
            </ToolColumn>
            <ToolColumn>
              <Field $gap={8}>
                <Swatch $left={7} />
                <FieldSelect aria-label="Object color"><option>ByLayer</option></FieldSelect><Caret $large />
              </Field>
              <Field $gap={1}>
                <LineSample />
                <FieldSelect aria-label="Lineweight"><option>ByLayer</option></FieldSelect><Caret $large />
              </Field>
              <Field $gap={1}>
                <LineSample />
                <FieldSelect aria-label="Linetype"><option>BYLAYER</option></FieldSelect><Caret $large />
              </Field>
            </ToolColumn>
          </PanelBody>
          <PanelTitle $left={14}>
            <TitleGroup>Properties<Caret $large /></TitleGroup>
            <Launcher aria-label="Properties palette"><Icon name="launch" size={7} /></Launcher>
          </PanelTitle>
        </Panel>
        <Panel>
          <PanelBody $left={2} $gap={5}>
            <BigButton icon="group" lines={['Group']} width={24} />
            <ToolColumn>
              <ToolButton icon="ungroup" />
              <ToolButton icon="groupEdit" />
              <ToolButton icon="groupSel" />
            </ToolColumn>
          </PanelBody>
          <Title>Groups</Title>
        </Panel>
        <Panel>
          <PanelBody $left={6} $gap={8}>
            <BigButton icon="measure" lines={['Measure']} width={36} menu />
            <ToolColumn $width={12}>
              <ToolButton icon="cursor" />
              <ToolButton icon="quickSel" />
              <ToolButton icon="calc" />
            </ToolColumn>
          </PanelBody>
          <Title left={9}>Utilities</Title>
        </Panel>
      </Ribbon>
      <FileTabs>
        <FileTab>KIẾN TRÚC 8,7x12.7m<QuickButton aria-label="Close KIẾN TRÚC"><Icon name="close" size={8} /></QuickButton></FileTab>
        <FileTab $active>KẾT CẤU 8,7x12.7m<QuickButton aria-label="Close KẾT CẤU"><Icon name="close" size={8} /></QuickButton></FileTab>
        <NewTab aria-label="New tab"><Icon name="plus" size={8} /></NewTab>
      </FileTabs>
      <TabRule />
      <Canvas>
        <ModelSpace />
        <Watermark>Copyright © FileThietKe.vn</Watermark>
      </Canvas>
    </Page>
  );
}
